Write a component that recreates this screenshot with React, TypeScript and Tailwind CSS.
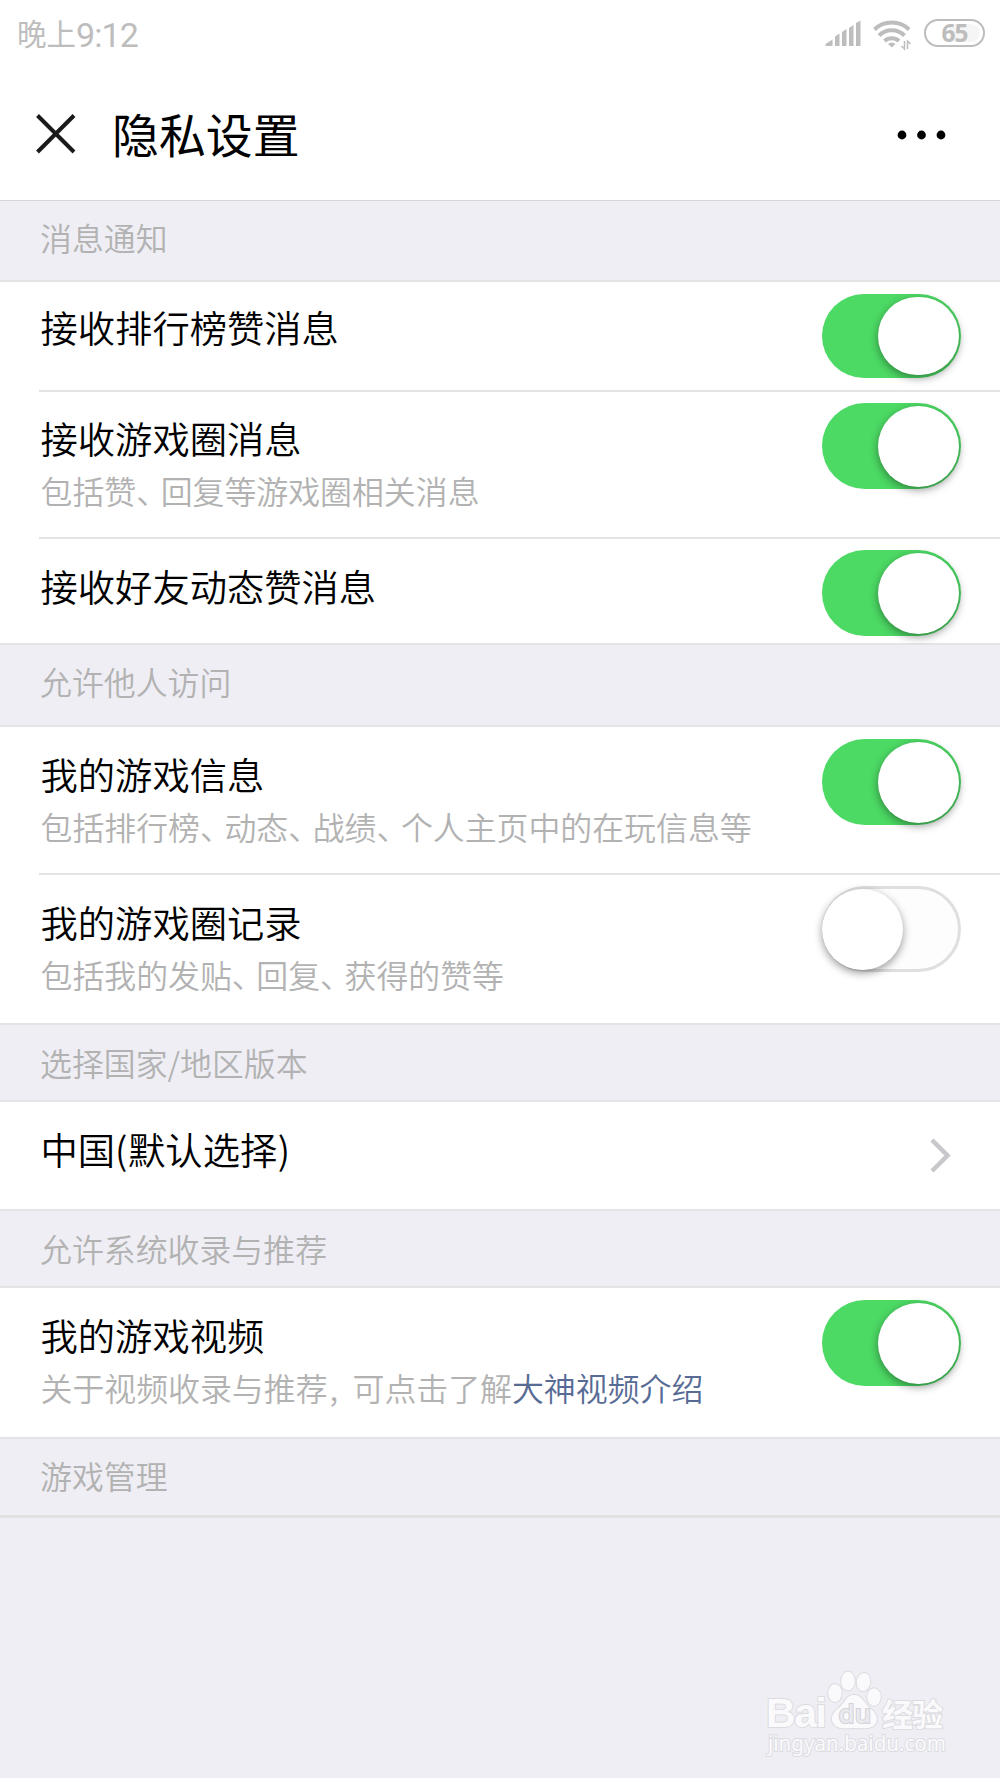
import { Fragment } from "react";
import type { ReactNode } from "react";

const SANS = "font-['Noto_Sans_CJK_SC',sans-serif]";

/** Sets punctuation tighter than its full-width cell. */
function Text({ children }: { children: string }) {
  return (
    <>
      {children.split(/([、,])/).map((part, i) =>
        part === "、" ? (
          <span key={i} className="mr-[8.500px] [font-feature-settings:'halt']">
            {part}
          </span>
        ) : part === "," ? (
          <span key={i} className="inline-block w-[25px] pl-[2px]">
            {part}
          </span>
        ) : (
          <Fragment key={i}>{part}</Fragment>
        )
      )}
    </>
  );
}

function Section({ className, children }: { className: string; children: string }) {
  return (
    <h2 className={`flex items-center bg-[#efeef4] pl-10 text-[31.900px] leading-none font-[350] text-[#b2b2b2] ${className}`}>
      {children}
    </h2>
  );
}

function Toggle({ on, className = "h-[86px]" }: { on: boolean; className?: string }) {
  return (
    <button
      role="switch"
      aria-checked={on}
      className={`flex w-[139px] shrink-0 items-center rounded-full ${className} ${
        on ? "justify-end bg-[#4cd964] pr-[2.500px]" : "justify-start border-[3px] border-[#dfdfdf] bg-[#fdfdfd]"
      }`}
    >
      <span
        className={`w-[81px] rounded-full bg-white shadow-[0_3px_8px_rgba(0,0,0,0.4)] ${
          className === "h-[84px]" ? "h-[78px]" : "h-[81px]"
        } ${on ? "" : "-ml-[3px]"}`}
      />
    </button>
  );
}

type RowProps = {
  className: string;
  textClassName?: string;
  title: ReactNode;
  detail?: ReactNode;
  divider?: "inset" | "full";
  children: ReactNode;
};

function Row({ className, textClassName = "pt-[22px]", title, detail, divider = "full", children }: RowProps) {
  return (
    <div className={`bg-white ${divider === "inset" ? "pl-[39px]" : ""}`}>
      <div
        className={`flex items-start justify-between border-b-2 border-[#e4e4e6] pr-[39px] ${
          divider === "inset" ? "pl-[1.500px]" : "pl-[40.500px]"
        } ${className}`}
      >
        <div className={`whitespace-nowrap ${textClassName}`}>
          <div className="text-[37.300px] leading-[48px] font-[350] text-black">{title}</div>
          {detail && <div className="mt-1 text-[31.900px] leading-[48px] font-[350] text-[#b2b2b2]">{detail}</div>}
        </div>
        {children}
      </div>
    </div>
  );
}

function StatusBar() {
  return (
    <div className="flex h-[66px] items-center justify-between pr-[15px] pl-[17px] text-[#bdbdbd]">
      <div className="flex items-center leading-none">
        <span className="text-[29.500px]">晚上</span>
        <span className="pt-[3px] font-[Roboto] text-[34px] tracking-[-0.900px]">9:12</span>
      </div>
      <div className="flex items-center">
        <svg width="37" height="27" viewBox="0 0 37 27" fill="currentColor" className="mr-[11px]">
          <path d="M0.500 26v-2l7-4.500V26zM10 26V16.500l4.500-3V26zM17 26V12l4.500-3V26zM24 26V8l4.500-3V26zM31 26V3L35.500 0.500V26z" />
        </svg>
        <svg width="38" height="32" viewBox="0 0 38 32" fill="none" stroke="currentColor" strokeWidth="4" className="mt-[3px] mr-[13px]">
          <path d="M1.500 10.500a25 25 0 0 1 34.500 0M6 16.500a18 18 0 0 1 25.500 0M11.500 22a11 11 0 0 1 14.500 0" />
          <path d="M15 25q3.700-3 7.500 0l-3.700 3.500z" fill="currentColor" stroke="none" />
          <path d="M31.500 22v8l-3-3M34.500 30v-8l3 3" strokeWidth="1.500" />
        </svg>
        <div className="flex h-[28px] w-[61px] items-center justify-center rounded-full border-[2.500px] border-[#bdbdbd] bg-[linear-gradient(to_right,#fff_40%,#f5f5f5_40%)] bg-clip-content p-[3px] font-['Open_Sans'] text-[24.500px] leading-none font-bold tracking-[-1px]">
          65
        </div>
      </div>
    </div>
  );
}

function Watermark() {
  return (
    <svg
      width="200"
      height="106"
      viewBox="0 0 200 106"
      className="mr-[38px] ml-auto"
      fill="#fafafc"
      stroke="#dcdce0"
      strokeWidth="2"
      paintOrder="stroke"
    >
      <text x="4" y="61.500" fontFamily="Liberation Sans" fontWeight="700" fontSize="41" textLength="61">
        Bai
      </text>
      <ellipse cx="73" cy="28" rx="6.800" ry="9" />
      <ellipse cx="86" cy="16" rx="6.800" ry="9.500" />
      <ellipse cx="101.500" cy="17" rx="6.800" ry="9" transform="rotate(8 101.500 17)" />
      <ellipse cx="112" cy="32" rx="6.800" ry="8.800" />
      <path d="M92 30c8 0 10 8 16 13c7 5 8 11 6 15c-4 7-13 5-22 5s-17 2-21-5c-3-5 0-11 6-15c6-5 7-13 15-13z" />
      <text x="76.500" y="58" fontFamily="Open Sans" fontWeight="600" fontSize="26" fill="#e9e9ee" stroke="#d2d2d8" strokeWidth="2">
        du
      </text>
      <text x="120" y="60.500" fontFamily="Noto Sans CJK SC" fontWeight="700" fontSize="31" textLength="61">
        经验
      </text>
      <text x="6" y="86" fontFamily="Noto Sans" fontSize="21.500" textLength="178" lengthAdjust="spacingAndGlyphs">
        jingyan.baidu.com
      </text>
    </svg>
  );
}

export default function App() {
  return (
    <div className={`flex h-[1778px] w-[1000px] flex-col overflow-hidden bg-[#efeef4] ${SANS}`}>
      <header className="h-[201px] shrink-0 border-b border-[#d5d5d8] bg-white">
        <StatusBar />
        <div className="flex h-[134px] items-center pr-[53px] pl-9">
          <svg width="40" height="40" viewBox="0 0 40 40" fill="none" stroke="#1a1a1a" strokeWidth="4" className="mt-[2px]">
            <path d="M1.500 1.500l36.500 36.500M38 1.500l-36.500 36.500" />
          </svg>
          <h1 className="ml-9 text-[46.900px] leading-none text-black">隐私设置</h1>
          <svg width="50" height="10" viewBox="0 0 50 10" className="mt-[3px] ml-auto">
            <circle cx="5" cy="5" r="4.400" />
            <circle cx="24.500" cy="5" r="4.400" />
            <circle cx="44" cy="5" r="4.400" />
          </svg>
        </div>
      </header>

      <Section className="h-[81px] border-b-2 border-[#e4e4e6] pb-[6px]">消息通知</Section>
      <Row className="h-[110px]" textClassName="pt-[21px]" title="接收排行榜赞消息" divider="inset">
        <div className="pt-3">
          <Toggle on className="h-[84px]" />
        </div>
      </Row>
      <Row className="h-[147px]" title="接收游戏圈消息" detail={<Text>包括赞、回复等游戏圈相关消息</Text>} divider="inset">
        <div className="pt-[11px]">
          <Toggle on />
        </div>
      </Row>
      <Row className="h-[106px]" textClassName="pt-[23px]" title="接收好友动态赞消息">
        <div className="pt-[11px]">
          <Toggle on />
        </div>
      </Row>

      <Section className="h-[82px] border-b-2 border-[#e4e4e6] pb-[7px]">允许他人访问</Section>
      <Row
        className="h-[148px]"
        textClassName="pt-[23px]"
        title="我的游戏信息"
        detail={<Text>包括排行榜、动态、战绩、个人主页中的在玩信息等</Text>}
        divider="inset"
      >
        <div className="pt-3">
          <Toggle on />
        </div>
      </Row>
      <Row className="h-[150px]" textClassName="pt-[22.500px]" title="我的游戏圈记录" detail={<Text>包括我的发贴、回复、获得的赞等</Text>}>
        <div className="pt-[11px]">
          <Toggle on={false} />
        </div>
      </Row>

      <Section className="h-[77px] border-b-2 border-[#e4e4e6]">
        选择国家/地区版本
      </Section>
      <Row
        className="h-[109px]"
        textClassName="pt-[23px]"
        title={
          <>
            中国<span className="tracking-[0.600px]">(</span>默认选择<span className="ml-[0.600px]">)</span>
          </>
        }
      >
        <svg width="22" height="36" viewBox="0 0 22 36" fill="none" stroke="#c7c7cc" strokeWidth="4.500" className="mt-[36px] mr-[9px]">
          <path d="M2 2l15.500 15.500-15.500 15.500" />
        </svg>
      </Row>

      <Section className="h-[77px] border-b-2 border-[#e4e4e6]">允许系统收录与推荐</Section>
      <Row
        className="h-[151px]"
        textClassName="pt-[23px]"
        title="我的游戏视频"
        detail={
          <>
            <Text>关于视频收录与推荐,可点击了解</Text>
            <a className="text-[#576b95]">大神视频介绍</a>
          </>
        }
      >
        <div className="pt-3">
          <Toggle on />
        </div>
      </Row>
      <Section className="h-[79px] border-b-[3px] border-[#e1e1e3] pb-[2px]">游戏管理</Section>
      <footer className="mt-[147px] flex">
        <Watermark />
      </footer>
    </div>
  );
}
